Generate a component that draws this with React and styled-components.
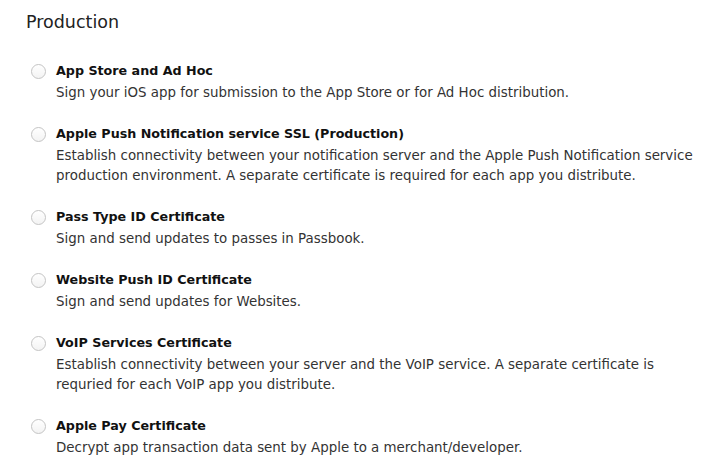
import styled, { createGlobalStyle } from 'styled-components';

const GlobalStyle = createGlobalStyle`
  body {
    margin: 0;
    background: #fff;
    font-family: 'DejaVu Sans', 'Liberation Sans', sans-serif;
  }
`;

const certificates = [
  {
    title: 'App Store and Ad Hoc',
    text: 'Sign your iOS app for submission to the App Store or for Ad Hoc distribution.',
  },
  {
    title: 'Apple Push Notification service SSL (Production)',
    text: 'Establish connectivity between your notification server and the Apple Push Notification service production environment. A separate certificate is required for each app you distribute.',
  },
  {
    title: 'Pass Type ID Certificate',
    text: 'Sign and send updates to passes in Passbook.',
  },
  {
    title: 'Website Push ID Certificate',
    text: 'Sign and send updates for Websites.',
  },
  {
    title: 'VoIP Services Certificate',
    text: 'Establish connectivity between your server and the VoIP service. A separate certificate is requried for each VoIP app you distribute.',
  },
  {
    title: 'Apple Pay Certificate',
    text: 'Decrypt app transaction data sent by Apple to a merchant/developer.',
  },
];

const App = () => {
  return (
    <>
      <GlobalStyle />
      <Section>
        <Heading>Production</Heading>
        <Options>
          {certificates.map((c) => (
            <Option key={c.title}>
              <Radio type='radio' name='cert' />
              <Body>
                <Title>{c.title}</Title>
                <Text>{c.text}</Text>
              </Body>
            </Option>
          ))}
        </Options>
      </Section>
    </>
  );
};

const Section = styled.div`
  padding: 10px 4px 0 26px;
  width: 709px;
  box-sizing: border-box;
`;

const Heading = styled.h2`
  margin: 0;
  font-size: 17.5px;
  font-weight: normal;
  color: #222;
  line-height: 24px;
`;

const Options = styled.ul`
  list-style: none;
  margin: 27px 0 0 0;
  padding: 0 0 0 5px;
  display: flex;
  flex-direction: column;
  gap: 21px;
`;

const Option = styled.li`
  display: flex;
  align-items: flex-start;
`;

const Radio = styled.input`
  appearance: none;
  margin: 3px 10px 0 0;
  width: 15px;
  height: 15px;
  flex: none;
  border: 1px solid #c4c4c4;
  border-radius: 50%;
  background: linear-gradient(#fff, #f3f3f3);
  cursor: pointer;
`;

const Body = styled.div`
  display: flex;
  flex-direction: column;
  max-width: 640px;
`;

const Title = styled.div`
  font-size: 12.7px;
  font-weight: bold;
  color: #111;
  line-height: 20px;
`;

const Text = styled.div`
  margin-top: 2px;
  font-size: 13.4px;
  color: #333;
  line-height: 20px;
`;

export default App;
